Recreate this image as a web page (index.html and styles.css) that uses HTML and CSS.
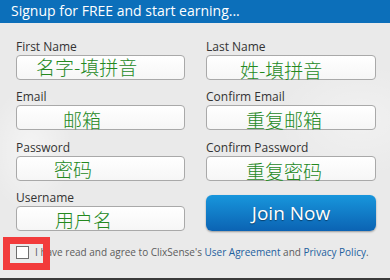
FILE: index.html
```html
<!DOCTYPE html>
<html lang="en">
<head>
<meta charset="utf-8">
<title>Signup</title>
<link rel="stylesheet" href="styles.css">
</head>
<body>
<div class="page">
  <div class="header">Signup for FREE and start earning...</div>
  <div class="form">
    <div class="grid">
      <div class="field">
        <label class="label">First Name</label>
        <div class="box fb-first"><span class="ph">名字-填拼音</span></div>
      </div>
      <div class="field">
        <label class="label">Last Name</label>
        <div class="box fb-last"><span class="ph">姓-填拼音</span></div>
      </div>
      <div class="field">
        <label class="label">Email</label>
        <div class="box fb-email"><span class="ph">邮箱</span></div>
      </div>
      <div class="field">
        <label class="label">Confirm Email</label>
        <div class="box fb-cemail"><span class="ph">重复邮箱</span></div>
      </div>
      <div class="field">
        <label class="label">Password</label>
        <div class="box fb-pass"><span class="ph">密码</span></div>
      </div>
      <div class="field">
        <label class="label">Confirm Password</label>
        <div class="box fb-cpass"><span class="ph">重复密码</span></div>
      </div>
      <div class="field">
        <label class="label">Username</label>
        <div class="box fb-user"><span class="ph">用户名</span></div>
      </div>
      <button class="join">Join Now</button>
    </div>
    <div class="agree">
      <span class="check-wrap"><span class="check"></span><span class="highlight"></span></span>
      <span class="agree-text">I have read and agree to ClixSense's <a class="link">User Agreement</a> and <a class="link">Privacy Policy</a>.</span>
    </div>
  </div>
</div>
</body>
</html>
```

FILE: styles.css
```css
* { box-sizing: border-box; }
html, body { margin: 0; padding: 0; }
body {
  width: 390px;
  height: 280px;
  overflow: hidden;
  font-family: "Open Sans", "Liberation Sans", sans-serif;
  background: #ebebeb;
}
.page {
  height: 280px;
  border-bottom: 2px solid #3a3a3a;
  background:
    radial-gradient(ellipse 60px 90px at 30px 150px, rgba(255,255,255,0.5), rgba(255,255,255,0) 70%),
    radial-gradient(ellipse 120px 80px at 360px 120px, rgba(255,255,255,0.35), rgba(255,255,255,0) 70%),
    #eaeaea;
}
.header {
  height: 23px;
  background: #0c6fba;
  color: #fff;
  font-size: 14px;
  line-height: 22px;
  padding-left: 11px;
}
.form {
  padding: 17px 15px 0 16px;
}
.grid {
  display: grid;
  grid-template-columns: 169px 170px;
  column-gap: 21px;
  row-gap: 10.4px;
}
.field {
  display: flex;
  flex-direction: column;
}
.label {
  display: block;
  font-size: 12px;
  line-height: 14px;
  color: #333;
  margin-bottom: 1px;
}
.box {
  height: 25px;
  border: 1px solid #a9a9a9;
  border-radius: 4px;
  background: linear-gradient(#ffffff, #f6f6f6);
  white-space: nowrap;
}
.ph {
  display: block;
  font-family: "Noto Sans CJK SC", sans-serif;
  font-weight: 300;
  font-size: 19px;
  line-height: 19px;
  color: #24891e;
}
.fb-first { padding: 1px 0 0 19px; }
.fb-last { padding: 4px 0 0 33px; }
.fb-email { padding: 4px 0 0 46px; }
.fb-cemail { padding: 4px 0 0 39px; }
.fb-pass { padding: 2px 0 0 37px; }
.fb-cpass { padding: 4px 0 0 39px; }
.fb-user { padding: 3px 0 0 38px; }
.join {
  align-self: end;
  height: 36px;
  width: 170px;
  border: none;
  border-radius: 6px;
  background: linear-gradient(#1896dc, #0b63b3);
  color: #fff;
  font-family: "Open Sans", "Liberation Sans", sans-serif;
  font-size: 19px;
  text-shadow: 0 1px 1px rgba(0,0,0,0.45);
  box-shadow: 0 1px 2px rgba(0,0,0,0.35);
  padding: 0;
}
.agree {
  display: flex;
  align-items: center;
  margin-top: 14px;
}
.check-wrap {
  position: relative;
  display: block;
  width: 13px;
  height: 13px;
  margin-right: 6px;
  flex: none;
}
.check {
  display: block;
  width: 13px;
  height: 13px;
  border: 1px solid #6e6e6e;
  background: #fff;
}
.highlight {
  position: absolute;
  left: -13px;
  top: -9px;
  width: 47px;
  height: 33px;
  border: 7px solid #f23b3b;
}
.agree-text {
  font-size: 10px;
  color: #5c5c5c;
  white-space: nowrap;
}
.link {
  color: #22609e;
}
```
